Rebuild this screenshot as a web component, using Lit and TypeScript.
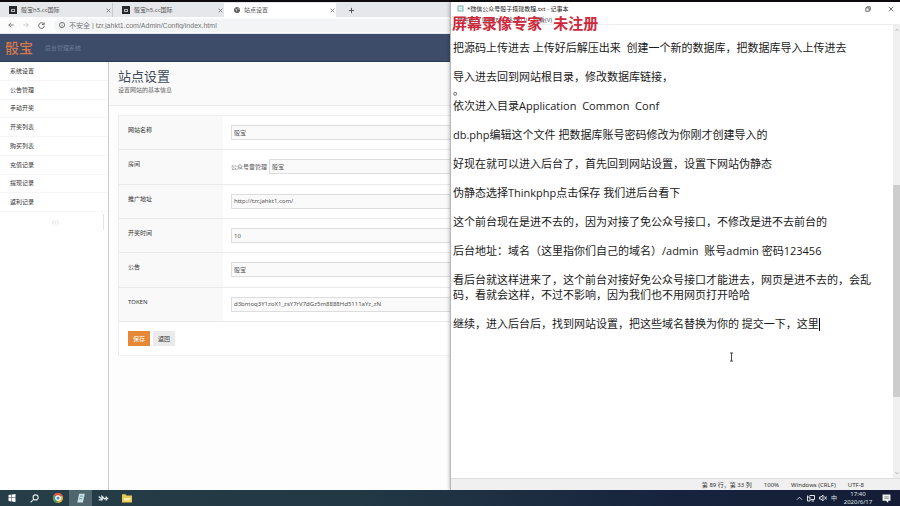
import { LitElement, html, css, svg, nothing } from "lit";
import { customElement } from "lit/decorators.js";

const base = css`
  * { box-sizing: border-box; }
  button, input { font: inherit; color: inherit; margin: 0; }
  button { border: 0; background: none; padding: 0; display: inline-flex; align-items: center; justify-content: center; white-space: nowrap; }
  a { color: inherit; text-decoration: none; }
  svg { display: block; flex: none; }
  h1, p, ul { margin: 0; padding: 0; font-weight: 400; }
  ul { list-style: none; }
`;

const icon = (size: number, body: unknown) =>
  html`<svg width=${size} height=${size} viewBox="0 0 16 16" fill="none" stroke="currentColor" stroke-width="2" aria-hidden="true">${body}</svg>`;

const closeIcon = icon(5, svg`<path d="M2 2l12 12M14 2L2 14"/>`);

@customElement("browser-window")
class BrowserWindow extends LitElement {
  static styles = [base, css`
    :host { display: flex; flex-direction: column; min-width: 0; overflow: hidden; background: #fff; color: #555; }
    .tabs { display: flex; height: 15px; padding-top: 1px; background: #e6e7eb; }
    .tab { flex: 0 0 112px; display: flex; align-items: center; gap: 4px; padding: 0 1px 0 9px; color: #555; }
    .tab span { flex: 1; }
    .tab + .tab { border-left: 1px solid #c9cad0; }
    .tab + .active { background: #fff; border-color: #fff; }
    .fav { display: grid; place-items: center; width: 8px; height: 8px; background: #26282e; }
    .fav i { width: 4px; height: 3px; border: 1px solid #bbb; }
    .plus { width: 30px; color: #444; }
    .bar { display: flex; align-items: center; gap: 9px; height: 17px; padding: 0 0 0 8px; background: #fcfcfd; border-bottom: 1px solid #e4e6ea; color: #555; }
    .address { flex: 1; display: flex; align-items: center; gap: 4px; height: 13px; padding-left: 5px; background: #f3f4f5; border-radius: 7px 0 0 7px; }
    .address input { flex: 1; min-width: 0; border: 0; padding: 0; background: none; font-family: "Liberation Sans", "Noto Sans CJK SC", sans-serif; font-size: 7px; color: #777; outline: 0; }
    header { display: flex; align-items: center; gap: 12px; height: 28px; padding-left: 5px; background: #3d4c68; border-bottom: 1px solid #2c3a56; color: #6f7d98; }
    .logo { font-size: 14px; font-weight: 500; color: #d3764d; }
    .body { flex: 1; display: flex; min-height: 0; }
    nav { flex: none; width: 109px; border-right: 1px solid #ccc; }
    nav ul { display: grid; grid-auto-rows: 1fr; height: 150px; }
    nav li { display: flex; align-items: center; padding-left: 10px; border-bottom: 1px solid #f6f6f6; color: #333; }
    .fold { width: 96px; height: 16px; margin: 2px 0 0 8px; border-right: 1px solid #e4e4e4; color: #aaa; }
    main { flex: 1; min-width: 0; background: #fdfdfd; }
    .title { height: 44px; padding: 5px 9px 0; background: #fafafa; border-bottom: 1px solid #ebebeb; color: #666; }
    h1 { font-size: 13px; line-height: 18px; color: #3f4a58; }
    .title p { line-height: 10px; }
    form { margin: 9px 0 0 9px; border: 1px solid #eee; border-width: 1px 0 0 1px; background: #fff; }
    .rows { display: grid; grid-auto-rows: 1fr; height: 206px; }
    .row { display: grid; grid-template-columns: 104px 1fr; border-bottom: 1px solid #e9e9e9; }
    .row label { padding: 10px 0 0 9px; line-height: 8px; background: #f9f9f9; color: #333; }
    .field { display: flex; align-items: center; gap: 2px; padding: 0 0 0 8px; }
    .field input { flex: 1; min-width: 0; height: 15px; padding: 0 2px; border: 1px solid #ddd; border-right: 0; background: #fafafa; outline: 0; }
    .actions { display: flex; gap: 3px; padding: 9px; border-bottom: 1px solid #f4f4f4; }
    .actions button { width: 22px; height: 15px; background: #eaeaea; color: #333; }
    .actions .save { background: #e58936; color: #fff; }
  `];

  nav = ["系统设置", "公告管理", "手动开奖", "开奖列表", "购买列表", "充值记录", "提现记录", "返利记录"];
  fields = [
    { id: "name", label: "网站名称", value: "骰宝" },
    { id: "rooms", label: "房间", value: "骰宝", prefix: "公众号童管理" },
    { id: "url", label: "推广地址", value: "http://tzr.jahkt1.com/" },
    { id: "rate", label: "开奖时间", value: "10" },
    { id: "notice", label: "公告", value: "骰宝" },
    { id: "token", label: "TOKEN", value: "d3bmoq3Y1zoX1_zsY7rV7dGz5m8888Hd5111aYz_zN" },
  ];

  render() {
    return html`
      <div class="tabs">
        <div class="tab"><i class="fav"><i></i></i><span>骰宝h5.cc国际</span><button aria-label="关闭">${closeIcon}</button></div>
        <div class="tab"><i class="fav"><i></i></i><span>骰宝h5.cc国际</span><button aria-label="关闭">${closeIcon}</button></div>
        <div class="tab active">${icon(6, svg`<circle cx="8" cy="8" r="7" fill="#555"/><path d="M3 5l5 2-1 5M10 2l3 5" stroke="#fff"/>`)}<span>站点设置</span><button aria-label="关闭">${closeIcon}</button></div>
        <button class="plus" aria-label="新标签页">${icon(7, svg`<path d="M8 2v12M2 8h12"/>`)}</button>
      </div>
      <div class="bar">
        <button aria-label="后退">${icon(6, svg`<path d="M15 8H2M8 2L2 8l6 6"/>`)}</button>
        <button aria-label="前进">${icon(6, svg`<path d="M1 8h13M8 2l6 6-6 6" stroke="#bbb"/>`)}</button>
        <button aria-label="刷新">${icon(7, svg`<path d="M13 4a6.5 6.5 0 1 0 1.500 5M14 1v5H9"/>`)}</button>
        <div class="address">${icon(6, svg`<circle cx="8" cy="8" r="7"/><path d="M8 7v5M8 4v1"/>`)}
          <input aria-label="地址" value="不安全 | tzr.jahkt1.com/Admin/Config/index.html"></div>
      </div>
      <header><span class="logo">骰宝</span><span>后台管理系统</span></header>
      <div class="body">
        <nav>
          <ul>${this.nav.map((n) => html`<li><a href="#">${n}</a></li>`)}</ul>
          <button class="fold" aria-label="收起">${icon(7, svg`<path d="M5 3L1 8l4 5M11 3l4 5-4 5M8 6v4" stroke-width="1"/>`)}</button>
        </nav>
        <main>
          <div class="title"><h1>站点设置</h1><p>设置网站的基本信息</p></div>
          <form>
            <div class="rows">
              ${this.fields.map((f) => html`<div class="row"><label for=${f.id}>${f.label}</label>
                <div class="field">${f.prefix ? html`<span>${f.prefix}</span>` : nothing}<input id=${f.id} .value=${f.value}></div></div>`)}
            </div>
            <div class="actions"><button type="button" class="save">保存</button><button type="button">返回</button></div>
          </form>
        </main>
      </div>`;
  }
}

@customElement("notepad-window")
class NotepadWindow extends LitElement {
  static styles = [base, css`
    :host { display: flex; flex-direction: column; position: relative; min-width: 0; background: #fff; color: #222; border-left: 1px solid #b5b8bd; box-shadow: 0 0 4px rgba(0, 0, 0, 0.35); }
    .title { display: flex; align-items: center; gap: 3px; height: 13px; padding: 0 6px; }
    .title span { flex: 1; }
    .controls { display: flex; gap: 17px; color: #444; }
    .menu { display: flex; gap: 6px; height: 10px; padding: 0 6px; align-items: center; border-bottom: 1px solid #eee; color: #555; }
    .mark { position: absolute; top: 12px; left: 1px; font-size: 15px; line-height: 20px; font-weight: 700; font-family: "Liberation Serif", "Noto Sans CJK SC", serif; color: #cf2a3c; white-space: pre; }
    .work { flex: 1; display: flex; min-height: 0; }
    .text { flex: 1; min-width: 0; padding: 15px 8px 0 2px; font-family: "Open Sans", "Noto Sans CJK SC", sans-serif; font-size: 11px; line-height: 15px; color: #1a1a1a; white-space: pre-wrap; outline: 0; }
    .text p { margin-bottom: 14px; }
    .text .tight { margin: 0; }
    .text .dot { margin: 0; line-height: 14px; }
    .caret { display: inline-block; width: 1px; height: 13px; background: #000; vertical-align: text-bottom; }
    .beam { position: absolute; top: 350px; left: 277px; }
    .scroll { display: flex; flex-direction: column; align-items: center; width: 7px; background: #f0f0f0; color: #777; padding: 3px 0; }
    .before { flex: 157; }
    .thumb { flex: 217; width: 100%; background: #cdcdcd; }
    .after { flex: 76; }
    .status { display: flex; justify-content: flex-end; align-items: center; height: 12px; padding-right: 36px; background: #f0f0f0; border-top: 1px solid #ddd; color: #333; }
    .status span + span { margin-left: 12px; }
  `];

  render() {
    return html`
      <div class="title">${icon(7, svg`<path d="M2 2h12v12H2z" fill="#b9e0d8" stroke="#7fb8b0"/><path d="M5 6h6M5 10h6" stroke="#fff"/>`)}
        <span>*微信公众号骰子搭建教程.txt - 记事本</span>
        <div class="controls"><button aria-label="还原">${icon(6, svg`<path d="M2 5h9v9H2zM5 5V2h9v9h-3"/>`)}</button><button aria-label="关闭">${icon(6, svg`<path d="M2 2l12 12M14 2L2 14"/>`)}</button></div>
      </div>
      <div class="menu"><span>文件(F)</span><span>编辑(E)</span><span>格式(O)</span><span>查看(V)</span></div>
      <div class="work">
        <div class="text" role="textbox" aria-multiline="true" aria-label="文本编辑器" contenteditable="true" spellcheck="false"><p>把源码上传进去 上传好后解压出来  创建一个新的数据库，把数据库导入上传进去</p><p class="tight">导入进去回到网站根目录，修改数据库链接，</p><p class="dot">。</p><p>依次进入目录Application  Common  Conf</p><p>db.php编辑这个文件 把数据库账号密码修改为你刚才创建导入的</p><p>好现在就可以进入后台了，首先回到网站设置，设置下网站伪静态</p><p>伪静态选择Thinkphp点击保存 我们进后台看下</p><p>这个前台现在是进不去的，因为对接了免公众号接口，不修改是进不去前台的</p><p>后台地址：域名（这里指你们自己的域名）/admin  账号admin 密码123456</p><p>看后台就这样进来了，这个前台对接好免公众号接口才能进去，网页是进不去的，会乱码，看就会这样，不过不影响，因为我们也不用网页打开哈哈</p><p>继续，进入后台后，找到网站设置，把这些域名替换为你的 提交一下，这里<span class="caret"></span></p></div>
        <div class="scroll">${icon(4, svg`<path d="M2 11l6-6 6 6"/>`)}<i class="before"></i><i class="thumb"></i><i class="after"></i>${icon(4, svg`<path d="M2 5l6 6 6-6"/>`)}</div>
      </div>
      <div class="status"><span>第 89 行，第 33 列</span><span>100%</span><span>Windows (CRLF)</span><span>UTF-8</span></div>
      <div class="mark">屏幕录像专家   未注册</div>
      <svg class="beam" width="7" height="10" viewBox="0 0 7 10" fill="none" stroke="#444" aria-hidden="true"><path d="M2 1h3M3.500 1v8M2 9h3"/></svg>`;
  }
}

@customElement("task-bar")
class TaskBar extends LitElement {
  static styles = [base, css`
    :host { display: flex; align-items: center; justify-content: space-between; background: linear-gradient(90deg, #263e47, #223845 40%, #17233d 75%, #141d35); color: #dfe5ea; overflow: hidden; }
    .apps, .tray { display: flex; align-items: center; height: 100%; }
    .apps button { width: 23px; height: 100%; }
    .apps .on { background: #50666e; }
    .tray { gap: 4px; padding-right: 9px; }
    time { width: 34px; text-align: center; line-height: 8px; }
    time span { display: block; }
    .note { margin-left: 3px; }
  `];

  render() {
    return html`
      <div class="apps">
        <button aria-label="开始">${icon(8, svg`<path d="M1 2l6-1v6H1zM8 1l7-1v7H8zM1 8h6v7l-6-1zM8 8h7v8l-7-1z" fill="#fff" stroke="none"/>`)}</button>
        <button aria-label="搜索">${icon(9, svg`<circle cx="10" cy="6" r="4.500"/><path d="M7 9l-6 6"/>`)}</button>
        <button aria-label="Chrome">${icon(10, svg`<circle cx="8" cy="8" r="8" fill="#dfb93c" stroke="none"/><path d="M8 8L1 4a8 8 0 0 1 14 0z" fill="#d9584a" stroke="none"/><path d="M8 8L1 4a8 8 0 0 0 7 12z" fill="#4d9d63" stroke="none"/><circle cx="8" cy="8" r="3.500" fill="#4b86d6" stroke="#fff"/>`)}</button>
        <button class="on" aria-label="记事本">${icon(10, svg`<path d="M5 1h9l-3 14H2z" fill="#c8e3e6" stroke="none"/><path d="M6 5h5M5 9h5" stroke="#7fa9b2"/>`)}</button>
        <button aria-label="录像">${icon(11, svg`<path d="M1 5l5 4V5l4 4M1 10h6M10 8h5M12 5v6"/>`)}</button>
        <button aria-label="文件管理器">${icon(10, svg`<path d="M0 2h6l1 2h9v11H0z" fill="#e6ca55" stroke="none"/><path d="M3 8h10v4H3z" fill="#f7edac" stroke="none"/>`)}</button>
      </div>
      <div class="tray">
        ${icon(7, svg`<path d="M2 11l6-6 6 6"/>`)}
        ${icon(8, svg`<path d="M5 3h10v8H7M1 3v11h5V6H1M9 14h5"/>`)}
        ${icon(8, svg`<path d="M1 6h3l4-4v12l-4-4H1zM11 5l4 6M15 5l-4 6"/>`)}
        <span>中</span>
        <time><span>17:40</span><span>2020/6/17</span></time>
        <span class="note">${icon(9, svg`<path d="M1 1h14v11h-4v4l-4-4H1z" fill="#eef2ee" stroke="none"/><path d="M4 5h8M4 8h8" stroke="#9aa59c"/>`)}</span>
      </div>`;
  }
}

@customElement("app-root")
class AppRoot extends LitElement {
  static styles = css`
    :host { display: grid; grid-template: 1fr 16px / 1fr 1fr; min-height: 100vh; box-sizing: border-box; border-top: 2px solid #0c0a0c; font-family: "Noto Sans", "Noto Sans CJK SC", sans-serif; font-size: 6px; line-height: 1; overflow: hidden; }
    task-bar { grid-column: 1 / -1; position: relative; }
  `;
  render() {
    return html`<browser-window></browser-window><notepad-window></notepad-window><task-bar></task-bar>`;
  }
}
